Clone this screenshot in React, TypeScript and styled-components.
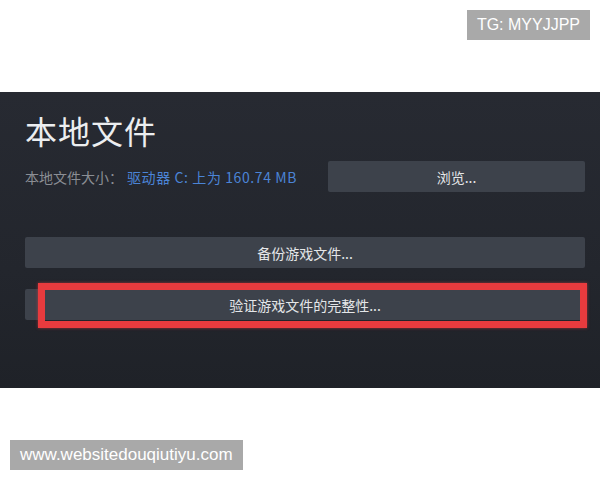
import React from 'react'
import styled, { createGlobalStyle } from 'styled-components'

const GlobalStyle = createGlobalStyle`
  html, body {
    margin: 0;
    padding: 0;
    background: #ffffff;
  }
  body {
    font-family: 'Liberation Sans', 'Noto Sans CJK SC', sans-serif;
  }
`

const Page = styled.div`
  width: 600px;
  height: 480px;
  display: flex;
  flex-direction: column;
  background: #ffffff;
  overflow: hidden;
`

const TopBar = styled.div`
  display: flex;
  justify-content: flex-end;
  padding: 10px 10px 0 0;
  height: 30px;
`

const Tag = styled.div<{ $pad?: number; $size?: number }>`
  background: #a9a9a9;
  color: #ffffff;
  font-family: 'Liberation Sans', 'Noto Sans', sans-serif;
  font-size: ${(p) => p.$size ?? 16}px;
  height: 30px;
  display: flex;
  align-items: center;
  padding: 0 ${(p) => p.$pad ?? 10}px;
`

const Panel = styled.div`
  margin-top: 52px;
  height: 296px;
  background: linear-gradient(180deg, #272a32 0%, #23262d 60%, #1f2228 100%);
  padding: 18px 15px 0 25px;
  box-sizing: border-box;
  display: flex;
  flex-direction: column;
  font-family: 'Noto Sans CJK SC', 'Noto Sans', sans-serif;
`

const Title = styled.h1`
  margin: 0;
  font-size: 32px;
  font-weight: 400;
  color: #eceef0;
  letter-spacing: 1px;
  line-height: 40px;
`

const InfoRow = styled.div`
  display: flex;
  align-items: center;
  justify-content: space-between;
  margin-top: 11px;
`

const Info = styled.div`
  font-size: 14px;
  color: #8b8e94;
  display: flex;
  align-items: center;
`

const Drive = styled.span`
  color: #4b84d6;
  margin-left: 4px;
  letter-spacing: 0.6px;
`

const Button = styled.div<{ $width?: number }>`
  height: 31px;
  ${(p) => (p.$width ? `width: ${p.$width}px;` : 'width: 100%;')}
  background: #3d424b;
  border-radius: 2px;
  color: #e4e6e8;
  font-size: 14px;
  display: flex;
  align-items: center;
  justify-content: center;
  box-sizing: border-box;
`

const Actions = styled.div`
  display: flex;
  flex-direction: column;
  gap: 21px;
  margin-top: 45px;
`

const Highlight = styled.div`
  position: relative;
`

const RedBox = styled.div`
  position: absolute;
  left: 13px;
  top: -6px;
  right: -2px;
  bottom: -8px;
  border: 7px solid #e83b3e;
  box-shadow: 0 0 3px rgba(232, 59, 62, 0.6);
  pointer-events: none;
`

const Footer = styled.div`
  margin-top: 52px;
  padding-left: 10px;
  display: flex;
`

export default function App() {
  return (
    <Page>
      <GlobalStyle />
      <TopBar>
        <Tag>TG: MYYJJPP</Tag>
      </TopBar>
      <Panel>
        <Title>本地文件</Title>
        <InfoRow>
          <Info>
            本地文件大小：
            <Drive>驱动器 C: 上为 160.74 MB</Drive>
          </Info>
          <Button $width={257}>浏览...</Button>
        </InfoRow>
        <Actions>
          <Button>备份游戏文件...</Button>
          <Highlight>
            <Button>验证游戏文件的完整性...</Button>
            <RedBox />
          </Highlight>
        </Actions>
      </Panel>
      <Footer>
        <Tag $pad={10} $size={17}>www.websitedouqiutiyu.com</Tag>
      </Footer>
    </Page>
  )
}
